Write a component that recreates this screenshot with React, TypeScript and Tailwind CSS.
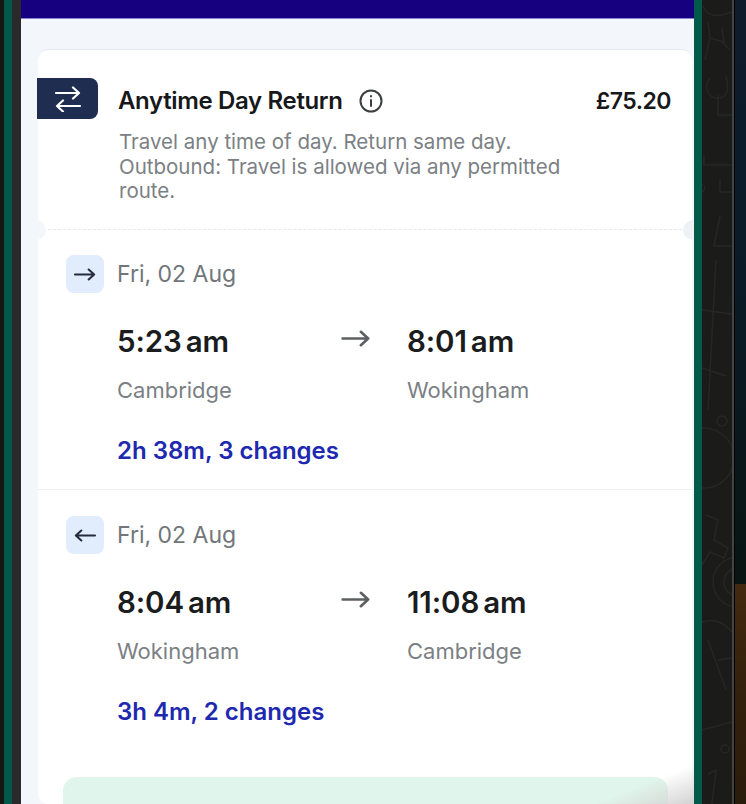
import React from "react";

function Arrow({ className, left }: { className?: string; left?: boolean }) {
  return (
    <svg viewBox="0 0 24 14" className={className} fill="none" stroke="currentColor" strokeWidth="2.2" strokeLinecap="round" strokeLinejoin="round">
      {left ? <path d="M23 7H2M8 1.5 2 7l6 5.5" /> : <path d="M1 7h21M16 1.5 22 7l-6 5.5" />}
    </svg>
  );
}

function Leg({ back, dep, arr, from, to, summary }: { back?: boolean; dep: [string, string]; arr: [string, string]; from: string; to: string; summary: string }) {
  return (
    <div className="pl-[28px]">
      <div className="flex items-center h-[38px]">
        <div className="w-[38px] h-[38px] rounded-[8px] bg-[#e1ecfd] flex items-center justify-center text-[#232b3d]">
          <Arrow left={back} className="w-[22px] h-[13px]" />
        </div>
        <span className="ml-[13px] text-[23px] leading-[28px] text-[#70767a]">Fri, 02 Aug</span>
      </div>
      <div className="mt-[30px] pl-[51px] flex h-[36px] items-center">
        <div className="w-[224px] shrink-0 text-[29.5px] leading-[36px] font-semibold text-[#1a1c1e] tracking-[-0.1px]">
          {dep[0]}<span className="ml-[4px]">{dep[1]}</span>
        </div>
        <Arrow className="w-[30px] h-[17px] text-[#5c6062] mb-[6px] shrink-0" />
        <div className="ml-[36px] text-[29.5px] leading-[36px] font-semibold text-[#1a1c1e] tracking-[-0.1px]">
          {arr[0]}<span className="ml-[4px]">{arr[1]}</span>
        </div>
      </div>
      <div className="mt-[17px] pl-[51px] flex h-[28px] items-center text-[22px] leading-[28px] text-[#7b8084]">
        <div className="w-[290px] shrink-0">{from}</div>
        <div>{to}</div>
      </div>
      <div className="mt-[31px] pl-[51px] text-[24px] leading-[32px] font-semibold text-[#2028b0]">{summary}</div>
    </div>
  );
}

export default function App() {
  return (
    <div className="w-[746px] h-[804px] overflow-hidden flex bg-[#1c1d1b] font-['Inter',sans-serif]">
      <div className="w-[4px] bg-[#161715] shrink-0" />
      <div className="w-[8px] bg-[#03594a] shrink-0" />
      <div className="w-[9px] bg-[#2a2a2a] shrink-0" />
      <div className="w-[673px] shrink-0 flex flex-col bg-[#f3f7fc] relative overflow-hidden">
        <div className="h-[19px] shrink-0 bg-[#170080] border-b border-b-[#8a7fd6]" />
        <div className="mt-[30px] ml-[17px] mr-[2px] bg-white rounded-[10px] border-t border-t-[#e6e9ec] flex-1 min-h-0">
          <div className="relative h-[180px]">
            <div className="absolute -left-[1px] top-[28px] w-[61px] h-[41px] bg-[#1f2d50] rounded-r-[8px] flex items-center justify-center text-white">
              <svg width="28" height="26" viewBox="0 0 28 26" fill="none" stroke="currentColor" strokeWidth="2.2" strokeLinecap="round" strokeLinejoin="round">
                <path d="M2 7h23M19 1.5 25 7l-6 5.5M26 20H3M9 14.5 3 20l6 5.5" />
              </svg>
            </div>
            <div className="pt-[35px] pl-[80px] pr-[21px] flex items-center">
              <span className="text-[24px] leading-[32px] font-semibold text-[#17181a] tracking-[-0.35px]">Anytime Day Return</span>
              <svg className="ml-[16px]" width="24" height="24" viewBox="0 0 24 24" fill="none" stroke="#3c3e40" strokeWidth="2" strokeLinecap="round">
                <circle cx="12" cy="12" r="10.5" />
                <path d="M12 11v6M12 7v.4" />
              </svg>
              <span className="ml-auto text-[23px] leading-[32px] font-semibold text-[#17181a] tracking-[-0.5px]">£75.20</span>
            </div>
            <div className="pl-[81px] pt-[13px] pr-[100px] text-[20.5px] leading-[24.5px] text-[#7b8084]">
              Travel any time of day. Return same day.<br />Outbound: Travel is allowed via any permitted<br />route.
            </div>
            <div className="absolute left-0 right-0 bottom-0 border-b border-dashed border-b-[#e7eaec]" />
            <div className="absolute -left-[12px] -bottom-[10px] w-[20px] h-[20px] rounded-full bg-[#f3f7fc]" />
            <div className="absolute -right-[11px] -bottom-[10px] w-[20px] h-[20px] rounded-full bg-[#eef2f5]" />
          </div>
          <div className="pt-[25px] pb-[22px] border-b border-b-[#eeeff1]">
            <Leg dep={["5:23", "am"]} arr={["8:01", "am"]} from="Cambridge" to="Wokingham" summary="2h 38m, 3 changes" />
          </div>
          <div className="pt-[26px]">
            <Leg back dep={["8:04", "am"]} arr={["11:08", "am"]} from="Wokingham" to="Cambridge" summary="3h 4m, 2 changes" />
          </div>
          <div className="mt-[49px] ml-[25px] mr-[24px] h-[60px] rounded-t-[14px] bg-[#e0f5ec]" />
        </div>
        <div className="absolute right-0 bottom-0 w-[100px] h-[40px] bg-gradient-to-br from-transparent from-50% to-[#d2d2d2]" />
      </div>
      <div className="w-[8px] bg-[#03594a] shrink-0" />
      <div className="w-[30px] shrink-0 bg-[#1b1c1a] relative overflow-hidden">
        <svg className="absolute inset-0" width="30" height="804" fill="none" stroke="#262725" strokeWidth="1.5">
          <path d="M1 6c4 10 14 12 29 6M6 22l2 16 14 4-2-14M8 38 3 60M20 42l8 8M8 78c-8 10 0 22 10 20s8-12 6-22M16 95v20h14M2 155v10h28M1 185a4 4 0 1 0 1 1M18 180v12h12M18 216l-6 30h18M14 260l-8 150M0 310l30 4M0 368l24 8" />
          <circle cx="20" cy="421" r="5" />
          <circle cx="2" cy="458" r="30" />
          <path d="M4 515l12 5-4 20 14 8-4 10-14-6-10 16" />
          <circle cx="36" cy="582" r="25" />
          <circle cx="36" cy="582" r="14" />
          <path d="M0 622c10-4 22 0 30 10M6 640l18 50M16 660l14-2M0 730l30-8" />
          <circle cx="23" cy="749" r="4" />
          <path d="M6 774l8-4-4 34" />
        </svg>
      </div>
      <div className="w-[2px] shrink-0 bg-[#444444]" />
      <div className="w-[1px] shrink-0 bg-black" />
      <div className="flex-1 flex flex-col">
        <div className="h-[584px] bg-gradient-to-b from-[#0e1c2c] via-[#0a1a26] to-[#081512]" />
        <div className="flex-1 bg-gradient-to-b from-[#43290f] via-[#33200c] to-[#2a1c0b]" />
      </div>
    </div>
  );
}
